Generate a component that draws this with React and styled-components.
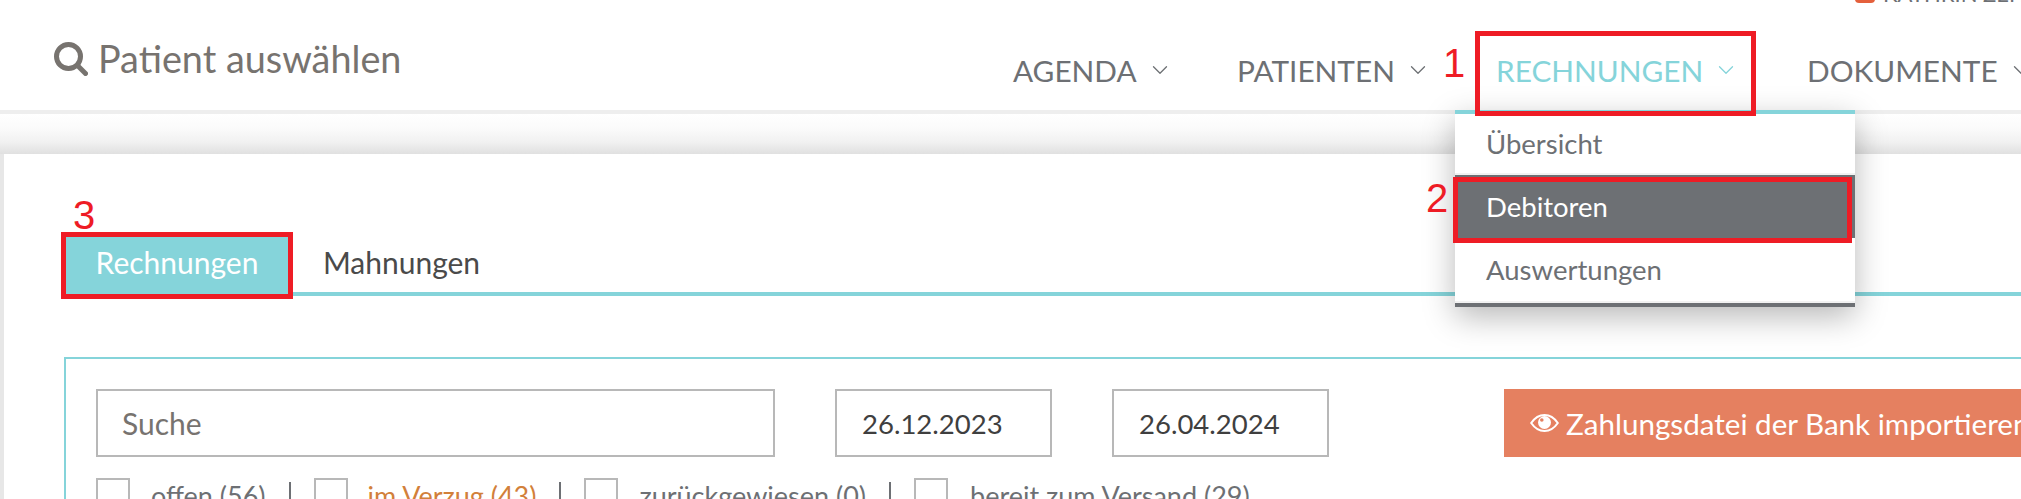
import React from "react";
import styled, { createGlobalStyle } from "styled-components";
import { FiChevronDown } from "react-icons/fi";

const teal = "#85d4da";
const annotationRed = "#ee1c25";
const buttonColor = "#e58060";

const GlobalStyle = createGlobalStyle`
  html, body {
    margin: 0;
    padding: 0;
    background: #fff;
  }
  body {
    font-family: Lato, "Open Sans", sans-serif;
    color: #6d7074;
  }
`;

const Page = styled.div`
  position: relative;
  width: 2021px;
  height: 499px;
  overflow: hidden;
  background: #fff;
`;

const Header = styled.header`
  position: relative;
  height: 110px;
  border-bottom: 4px solid #eeeeee;
  background: #fff;
  display: flex;
  align-items: flex-start;
  justify-content: space-between;
`;

const UserTag = styled.div`
  position: absolute;
  top: -18px;
  left: 1855px;
  display: flex;
  align-items: center;
  gap: 8px;
  font-size: 22px;
  line-height: 24px;
  white-space: nowrap;
  color: #6d7074;
`;

const UserDot = styled.span`
  width: 20px;
  height: 17px;
  border-radius: 4px;
  background: #e4603c;
`;

const PatientSearch = styled.div`
  display: flex;
  align-items: center;
  gap: 10px;
  margin: 39px 0 0 54px;
  font-size: 37.8px;
  line-height: 40px;
  color: #77736f;
  white-space: nowrap;
`;

const Nav = styled.nav`
  display: flex;
  position: absolute;
  left: 994px;
  top: 0;
  height: 110px;
`;

const NavItem = styled.div`
  display: flex;
  align-items: center;
  gap: 10px;
  width: ${(p) => p.$width}px;
  padding: 30px 0 0 19px;
  box-sizing: border-box;
  height: 110px;
  font-size: 29.8px;
  white-space: nowrap;
  color: ${(p) => (p.$active ? teal : "#6d7074")};
  svg {
    width: 26px;
    height: 26px;
    flex: none;
    stroke-width: 1.2;
  }
`;

const Dropdown = styled.div`
  position: absolute;
  z-index: 5;
  top: 110px;
  left: 1455px;
  width: 400px;
  background: #fff;
  border-top: 4px solid ${teal};
  border-bottom: 4px solid #6d7074;
  box-shadow: 0 10px 30px rgba(0, 0, 0, 0.28);
`;

const MenuItem = styled.div`
  height: ${(p) => p.$height}px;
  box-sizing: border-box;
  display: flex;
  align-items: center;
  padding-left: 31px;
  font-size: 27.5px;
  color: ${(p) => (p.$selected ? "#fff" : "#6d7074")};
  background: ${(p) => (p.$selected ? "#6d7074" : "#fff")};
  border-bottom: ${(p) => (p.$divided ? "2px solid #f2f2f2" : "0")};
`;

const Backdrop = styled.div`
  height: 385px;
  padding: 40px 0 0 4px;
  box-sizing: border-box;
  background: linear-gradient(
    to bottom,
    #fff 0,
    #fbfbfb 14px,
    #f1f1f1 28px,
    #e0e0e0 40px,
    #e7e7e7 40px
  );
`;

const Card = styled.main`
  height: 345px;
  background: #fff;
  padding: 78px 0 0 60px;
  box-sizing: border-box;
`;

const Tabs = styled.div`
  display: flex;
  height: 60px;
  border-bottom: 4px solid ${teal};
`;

const Tab = styled.div`
  display: flex;
  align-items: center;
  justify-content: center;
  width: ${(p) => p.$width}px;
  padding-right: ${(p) => (p.$active ? 3 : 0)}px;
  box-sizing: border-box;
  font-size: 30px;
  color: ${(p) => (p.$active ? "#fff" : "#4a4a4a")};
  background: ${(p) => (p.$active ? teal : "transparent")};
`;

const FilterBox = styled.section`
  margin-top: 61px;
  border: 2px solid ${teal};
  border-right: 0;
  padding: 30px 0 0 30px;
  height: 200px;
`;

const FieldRow = styled.div`
  display: flex;
  align-items: stretch;
  height: 68px;
`;

const TextField = styled.div`
  width: ${(p) => p.$width}px;
  margin-right: ${(p) => p.$gap}px;
  flex: none;
  box-sizing: border-box;
  border: 2px solid #b8b8b8;
  display: flex;
  align-items: center;
  padding-left: ${(p) => p.$inset}px;
  font-size: ${(p) => (p.$value ? 27.5 : 30)}px;
  color: ${(p) => (p.$value ? "#3f3f3f" : "#77736f")};
`;

const ImportButton = styled.div`
  flex: none;
  width: 560px;
  background: ${buttonColor};
  color: #fff;
  display: flex;
  align-items: center;
  gap: 7px;
  padding-left: 26px;
  box-sizing: border-box;
  font-size: 29.6px;
  white-space: nowrap;
`;

const StatusRow = styled.div`
  display: flex;
  align-items: center;
  margin-top: 21px;
  height: 34px;
  font-size: 27px;
  white-space: nowrap;
`;

const CheckBox = styled.span`
  flex: none;
  width: 34px;
  height: 34px;
  box-sizing: border-box;
  border: 2px solid #b8b8b8;
  margin-right: ${(p) => p.$gap}px;
`;

const StatusLabel = styled.span`
  color: ${(p) => (p.$late ? "#d2803a" : "#6d7074")};
`;

const Divider = styled.span`
  flex: none;
  width: 2px;
  height: 26px;
  background: #6d7074;
  margin: 0 23px;
`;

const Marker = styled.div`
  position: absolute;
  z-index: 7;
  top: ${(p) => p.$top}px;
  left: ${(p) => p.$left}px;
  width: ${(p) => p.$width}px;
  height: ${(p) => p.$height}px;
  box-sizing: border-box;
  border: 5px solid ${annotationRed};
`;

const Callout = styled.span`
  position: absolute;
  z-index: 7;
  top: ${(p) => p.$top}px;
  left: ${(p) => p.$left}px;
  font-family: "Liberation Sans", Arial, sans-serif;
  font-size: 40px;
  line-height: 40px;
  color: ${annotationRed};
`;

const SearchIcon = () => (
  <svg width="34" height="34" viewBox="0 0 34 34" fill="none" stroke="#77736f" strokeWidth="5" strokeLinecap="round">
    <circle cx="14.5" cy="14.5" r="12" />
    <path d="M24 24l7.5 7.5" />
  </svg>
);

const EyeIcon = () => (
  <svg width="29" height="18" viewBox="0 0 29 18">
    <path
      d="M1.2 9C5 3.4 9.4 1 14.5 1s9.5 2.4 13.3 8c-3.8 5.6-8.2 8-13.3 8S5 14.6 1.2 9z"
      fill="none"
      stroke="#fff"
      strokeWidth="2"
    />
    <circle cx="14.5" cy="8.5" r="6.5" fill="#fff" />
    <circle cx="11.8" cy="6" r="1.8" fill={buttonColor} />
  </svg>
);

const navItems = [
  { label: "AGENDA", width: 224 },
  { label: "PATIENTEN", width: 259 },
  { label: "RECHNUNGEN", width: 311, active: true },
  { label: "DOKUMENTE", width: 300 },
];

const statuses = [
  { label: "offen (56)", gap: 21 },
  { label: "im Verzug (43)", gap: 20, late: true },
  { label: "zurückgewiesen (0)", gap: 21 },
  { label: "bereit zum Versand (29)", gap: 22, last: true },
];

export default function App() {
  return (
    <Page>
      <GlobalStyle />
      <Header>
        <UserTag>
          <UserDot />
          KATHRIN ZEHNDER
        </UserTag>
        <PatientSearch>
          <SearchIcon />
          Patient auswählen
        </PatientSearch>
        <Nav>
          {navItems.map((item) => (
            <NavItem key={item.label} $width={item.width} $active={item.active}>
              {item.label}
              <FiChevronDown />
            </NavItem>
          ))}
        </Nav>
      </Header>
      <Backdrop>
        <Card>
          <Tabs>
            <Tab $active $width={229}>Rechnungen</Tab>
            <Tab $width={217}>Mahnungen</Tab>
          </Tabs>
          <FilterBox>
            <FieldRow>
              <TextField $width={679} $gap={60} $inset={24}>Suche</TextField>
              <TextField $width={217} $gap={60} $inset={25} $value>26.12.2023</TextField>
              <TextField $width={217} $gap={175} $inset={25} $value>26.04.2024</TextField>
              <ImportButton>
                <EyeIcon />
                Zahlungsdatei der Bank importieren
              </ImportButton>
            </FieldRow>
            <StatusRow>
              {statuses.map((status) => (
                <React.Fragment key={status.label}>
                  <CheckBox $gap={status.gap} />
                  <StatusLabel $late={status.late}>{status.label}</StatusLabel>
                  {!status.last && <Divider />}
                </React.Fragment>
              ))}
            </StatusRow>
          </FilterBox>
        </Card>
      </Backdrop>
      <Dropdown>
        <MenuItem $height={61} $divided>Übersicht</MenuItem>
        <MenuItem $height={63} $selected>Debitoren</MenuItem>
        <MenuItem $height={65} $divided>Auswertungen</MenuItem>
      </Dropdown>
      <Marker $top={31} $left={1475} $width={281} $height={85} />
      <Marker $top={177} $left={1453} $width={399} $height={66} />
      <Marker $top={232} $left={61} $width={232} $height={67} />
      <Callout $top={43} $left={1443}>1</Callout>
      <Callout $top={178} $left={1426}>2</Callout>
      <Callout $top={195} $left={73}>3</Callout>
    </Page>
  );
}
